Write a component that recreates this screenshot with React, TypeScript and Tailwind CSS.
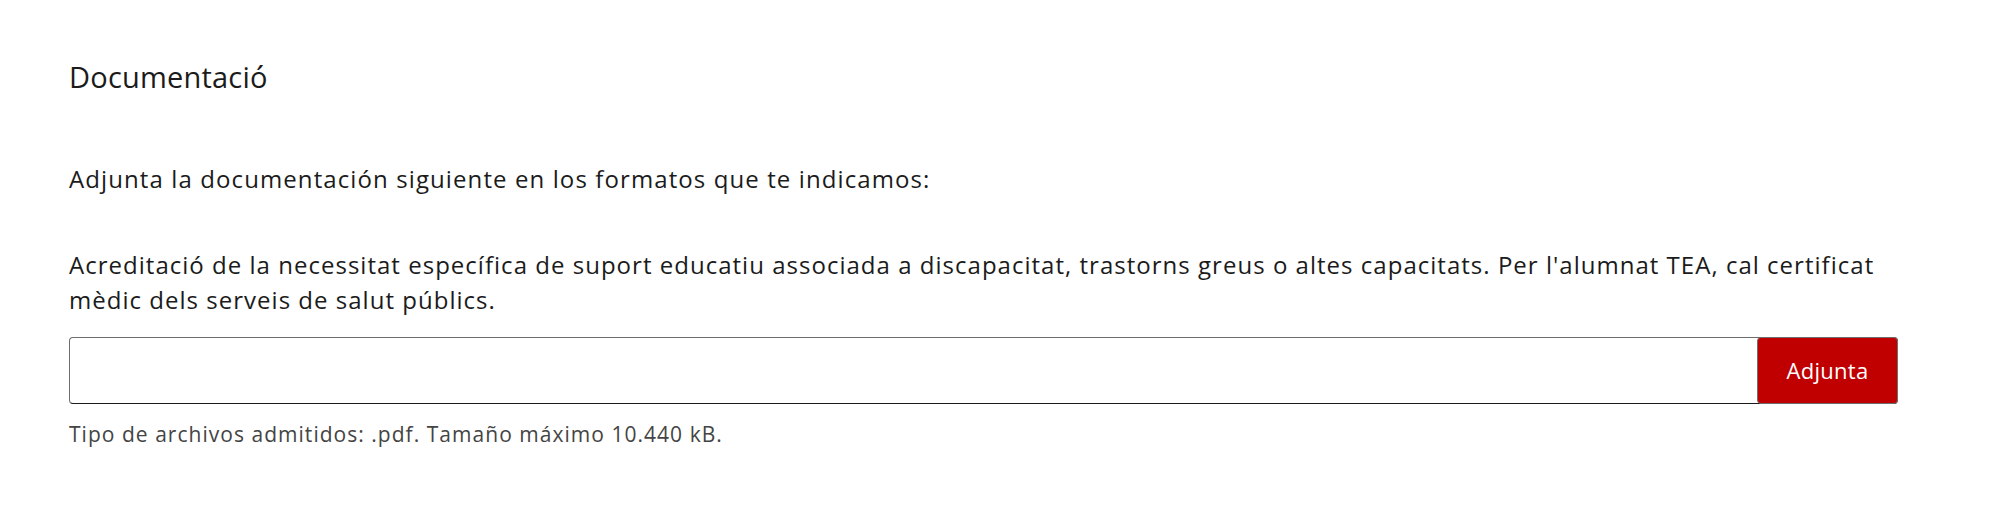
import React from 'react';

export default function App() {
  return (
    <div className="min-h-[519px] bg-white pl-[69px] pr-[102px] pt-[58px] font-['Open_Sans',sans-serif] text-[#1b1b1b]">
      <h2 className="text-[29px] leading-[38px] tracking-[0.2px]">Documentació</h2>

      <p className="mt-[68px] text-[24px] leading-[30px] tracking-[1.1px]">
        Adjunta la documentación siguiente en los formatos que te indicamos:
      </p>

      <div className="mt-[53px]">
        <label className="block text-[24px] leading-[35px] tracking-[1.02px]">
          Acreditació de la necessitat específica de suport educatiu associada a discapacitat, trastorns greus o altes
          capacitats. Per l'alumnat TEA, cal certificat mèdic dels serveis de salut públics.
        </label>

        <div className="mt-[20px] flex h-[67px] rounded-[4px] border border-[#6e6e6e] border-b-[#1b1b1b]">
          <input type="text" className="min-w-0 flex-1 bg-transparent px-4 outline-none" />
          <button
            type="button"
            className="-my-px -mr-px w-[141px] rounded-[4px] border border-[#6e6e6e] bg-[#c00000] text-[22px] tracking-[0.3px] text-white"
          >
            Adjunta
          </button>
        </div>

        <p className="mt-[16px] text-[21px] leading-[28px] tracking-[1.03px] text-[#444]">
          Tipo de archivos admitidos: .pdf. Tamaño máximo 10.440 kB.
        </p>
      </div>
    </div>
  );
}
